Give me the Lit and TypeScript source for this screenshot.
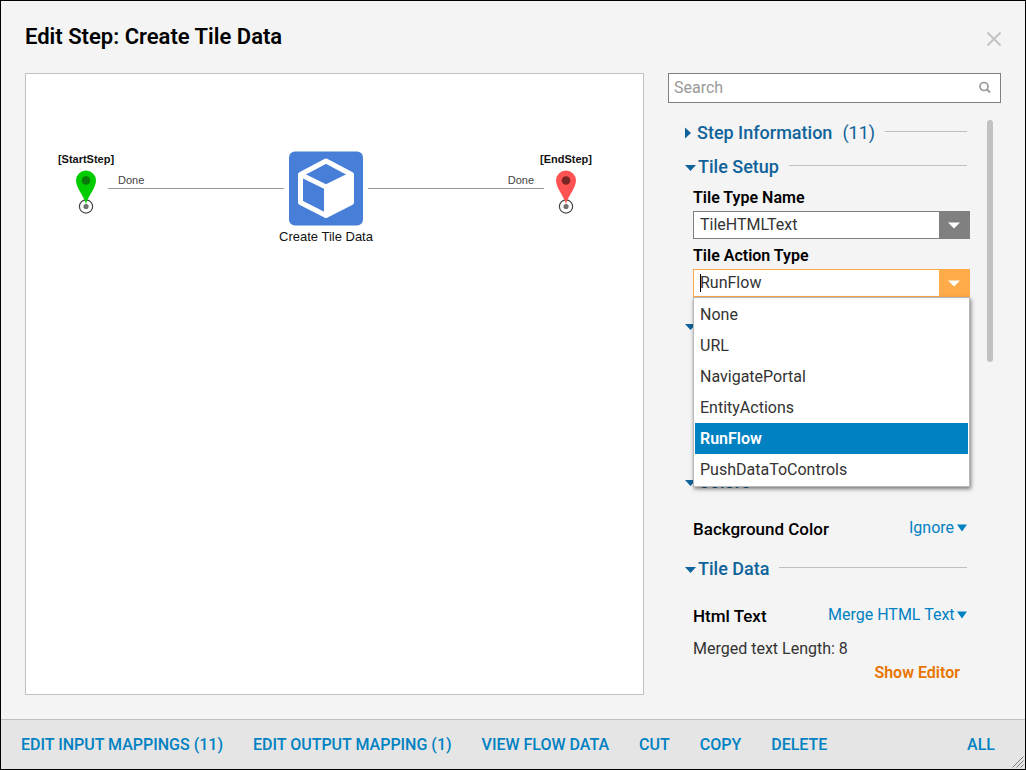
import { LitElement, html, svg, css, nothing } from "lit";
import { customElement, property, state } from "lit/decorators.js";
import { classMap } from "lit/directives/class-map.js";

const downArrow = (label = "arrow") => svg`
  <svg class=${label} width="12" height="7" viewBox="0 0 12 7" aria-hidden="true">
    <path d="M0 0.5h12L6 6.5z" fill="currentColor" />
  </svg>`;

@customElement("section-heading")
class SectionHeading extends LitElement {
  @property() name = "";
  @property() count = "";
  @property({ type: Boolean }) open = false;

  static styles = css`
    :host {
      display: block;
    }
    .heading {
      display: flex;
      align-items: center;
      width: 100%;
      height: 34px;
      margin: 0;
      padding: 0 3px 0 0;
      border: 0;
      background: none;
      color: #0f639a;
      font: 500 18px/24px Roboto, sans-serif;
      text-align: left;
      white-space: pre;
      cursor: pointer;
    }
    .marker {
      flex: none;
      width: 13px;
      height: 12px;
    }
    .marker.open {
      margin-right: 1px;
    }
    .count {
      margin-left: 10px;
      font-weight: 400;
    }
    .rule {
      flex: 1;
      height: 1px;
      margin: 0 0 4px 10px;
      background: #c0c0c0;
    }
  `;

  render() {
    return html`
      <button class="heading" aria-expanded=${this.open ? "true" : "false"} aria-label=${this.name ? nothing : "Section"}>
        <svg class=${this.open ? "marker open" : "marker"} viewBox="0 0 13 12" aria-hidden="true">
          <path d=${this.open ? "M1 4h11L6.5 10z" : "M1 0.5v11L7 6z"} fill="currentColor" />
        </svg>
        <span>${this.name}</span>
        ${this.count ? html`<span class="count">(${this.count})</span>` : nothing}
        <span class="rule"></span>
      </button>
    `;
  }
}

/** Canvas that shows the step between its start and end pins. */
@customElement("flow-canvas")
class FlowCanvas extends LitElement {
  static styles = css`
    :host {
      display: block;
      position: relative;
      overflow: hidden;
      box-sizing: border-box;
      border: 1px solid #c0c0c0;
      background: #fff;
      font-family: "Liberation Sans", Arial, sans-serif;
    }
    .node {
      position: absolute;
      display: flex;
      flex-direction: column;
      align-items: center;
      width: 120px;
      color: #111;
    }
    .start {
      left: 0;
      top: 78px;
    }
    .end {
      left: 480px;
      top: 78px;
    }
    .step {
      left: 240px;
      top: 77px;
      font-size: 13px;
      line-height: 20px;
    }
    .pin-label {
      font-size: 11px;
      font-weight: 700;
      line-height: 14px;
    }
    .pin {
      margin-top: 4px;
    }
    .link {
      position: absolute;
      top: 100px;
      height: 15px;
      padding: 0 10px;
      box-sizing: border-box;
      border-bottom: 1px solid #999;
      color: #444;
      font-size: 11px;
      line-height: 13px;
    }
    .link-in {
      left: 82px;
      width: 176px;
    }
    .link-out {
      left: 342px;
      width: 176px;
      text-align: right;
    }
  `;

  private pin(fill: string, dot: string) {
    return html`
      <svg class="pin" width="22" height="46" viewBox="0 0 22 46" aria-hidden="true">
        <circle cx="11" cy="36.500" r="6.600" fill="#fff" stroke="#444" stroke-width="1.200" />
        <path d="M11 34.500C10.500 28 1 18.500 1 10.500a10 10 0 0 1 20 0C21 18.500 11.500 28 11 34.500z" fill=${fill} />
        <circle cx="11" cy="10.500" r="4.300" fill=${dot} />
        <circle cx="11" cy="36.500" r="2.600" fill="#707070" />
      </svg>
    `;
  }

  render() {
    return html`
      <div class="link link-in">Done</div>
      <div class="link link-out">Done</div>
      <div class="node start">
        <span class="pin-label">[StartStep]</span>
        ${this.pin("#00cc00", "#087808")}
      </div>
      <div class="node step">
        <svg width="76" height="76" viewBox="0 0 76 76" aria-hidden="true">
          <rect x="1" y="0.500" width="74" height="74" rx="6" fill="#467ed8" />
          <path
            d="M38 10 63.500 23.500v28L38 64.500 12.500 51.500v-28z"
            fill="none"
            stroke="#fff"
            stroke-width="5"
            stroke-linejoin="round"
          />
          <path d="M12.500 23.500 38 36 63.500 23.500" fill="none" stroke="#fff" stroke-width="5" />
          <path d="M36 35.500 63.500 22.500v29L36 65z" fill="#fff" />
        </svg>
        <span>Create Tile Data</span>
      </div>
      <div class="node end">
        <span class="pin-label">[EndStep]</span>
        ${this.pin("#ff5252", "#7a2626")}
      </div>
    `;
  }
}

@customElement("app-root")
class AppRoot extends LitElement {
  @state() private action = "RunFlow";

  private readonly actions = ["None", "URL", "NavigatePortal", "EntityActions", "RunFlow", "PushDataToControls"];
  private readonly commands = [
    "EDIT INPUT MAPPINGS (11)",
    "EDIT OUTPUT MAPPING (1)",
    "VIEW FLOW DATA",
    "CUT",
    "COPY",
    "DELETE",
  ];

  static styles = css`
    :host {
      display: flex;
      flex-direction: column;
      position: relative;
      box-sizing: border-box;
      height: 100vh;
      overflow: hidden;
      border: 1px solid #000;
      background: #f4f4f4;
      color: #333;
      font: 400 16px/24px Roboto, sans-serif;
    }
    button,
    input,
    select {
      margin: 0;
      padding: 0;
      border: 0;
      border-radius: 0;
      outline: 0;
      background: none;
      color: inherit;
      font: inherit;
    }
    button {
      cursor: pointer;
    }
    .header {
      display: flex;
      align-items: center;
      justify-content: space-between;
      height: 72px;
      padding: 0 24px;
    }
    .title {
      margin: 0;
      color: #000;
      font-size: 22px;
      font-weight: 600;
      line-height: 28px;
    }
    .close {
      display: flex;
      margin-top: 4px;
      color: #c4c4c4;
    }
    .main {
      flex: 1;
      display: grid;
      grid-template-columns: minmax(0, 1fr) 333px;
      gap: 24px;
      min-height: 0;
      padding: 0 24px 24px;
    }
    .side {
      display: flex;
      flex-direction: column;
      min-height: 0;
    }
    .search {
      display: flex;
      align-items: center;
      height: 30px;
      box-sizing: border-box;
      padding: 0 8px 0 5px;
      border: 1px solid #808080;
      background: #fff;
      color: #999;
    }
    .search-input {
      flex: 1;
      min-width: 0;
    }
    .search-input::placeholder {
      color: #999;
      opacity: 1;
    }
    .panel {
      flex: 1;
      display: flex;
      min-height: 0;
      padding: 13px 8px 0 16px;
    }
    .properties {
      flex: 1;
      min-width: 0;
    }
    .track {
      width: 6px;
      margin: 4px 0 0 17px;
    }
    .thumb {
      height: 42%;
      border-radius: 3px;
      background: #c1c1c1;
    }
    .fields {
      display: flex;
      flex-direction: column;
      gap: 5px;
      padding: 2px 0 12px 9px;
    }
    .field {
      display: flex;
      flex-direction: column;
      gap: 1px;
      position: relative;
    }
    .label {
      color: #000;
      font-weight: 600;
    }
    .combo {
      display: flex;
      position: relative;
      height: 28px;
      box-sizing: border-box;
      border: 1px solid #808080;
      background: #fff;
    }
    .combo.active {
      border-color: #ffab4a;
    }
    .value {
      appearance: none;
      flex: 1;
      min-width: 0;
      padding: 0 0 0 6px;
    }
    .drop {
      display: flex;
      align-items: center;
      justify-content: center;
      width: 30px;
      background: #808080;
      color: #fff;
    }
    .active .drop {
      background: #ffab4a;
    }
    .caret {
      position: absolute;
      left: 6px;
      top: 4px;
      width: 1px;
      height: 18px;
      background: #000;
    }
    .list {
      position: absolute;
      z-index: 1;
      top: 100%;
      left: 0;
      right: 0;
      margin: 0;
      padding: 1px;
      border: 1px solid #b8b8b8;
      background: #fff;
      box-shadow: 1px 2px 4px rgba(0, 0, 0, 0.5);
      list-style: none;
    }
    .option {
      padding: 4px 5px 3px;
      cursor: pointer;
    }
    .option.selected {
      background: #0081c2;
      color: #fff;
      font-weight: 600;
    }
    .group {
      min-height: 122px;
    }
    .row {
      display: flex;
      align-items: center;
      justify-content: space-between;
      padding: 17px 3px 10px 9px;
    }
    .row .label {
      font-size: 17px;
      font-weight: 500;
    }
    .mode {
      display: flex;
      align-items: center;
      gap: 2px;
      padding-bottom: 2px;
      color: #0081c2;
    }
    .mode-select {
      appearance: none;
      height: 24px;
      cursor: pointer;
    }
    .note {
      margin: 0;
      padding: 0 0 0 9px;
      line-height: 20px;
    }
    .actions {
      display: flex;
      justify-content: flex-end;
      padding: 2px 10px 0 0;
    }
    .show {
      color: #e87500;
      font-weight: 600;
    }
    .footer {
      display: flex;
      align-items: center;
      gap: 30px;
      height: 49px;
      padding: 0 30px 0 20px;
      border-top: 1px solid #c0c0c0;
      background: #e5e5e5;
    }
    .command {
      color: #0081c2;
      font-weight: 500;
      white-space: nowrap;
    }
    .all {
      margin-left: auto;
    }
    .grip {
      position: absolute;
      right: 1px;
      bottom: 1px;
    }
  `;

  private mode(id: string, label: string, value: string) {
    return html`
      <div class="row">
        <label class="label" for=${id}>${label}</label>
        <span class="mode">
          <select class="mode-select" id=${id}>
            <option>${value}</option>
          </select>
          <svg width="10" height="8" viewBox="0 0 10 8" aria-hidden="true">
            <path d="M0 0.500h10L5 7.500z" fill="currentColor" />
          </svg>
        </span>
      </div>
    `;
  }

  render() {
    return html`
      <header class="header">
        <h1 class="title">Edit Step: Create Tile Data</h1>
        <button class="close" aria-label="Close">
          <svg width="14" height="14" viewBox="0 0 14 14" aria-hidden="true">
            <path d="M0.500 0.500l13 13M13.500 0.500l-13 13" stroke="currentColor" stroke-width="2" />
          </svg>
        </button>
      </header>

      <main class="main">
        <flow-canvas></flow-canvas>
        <aside class="side">
          <div class="search">
            <input class="search-input" type="text" placeholder="Search" aria-label="Search" />
            <svg width="14" height="14" viewBox="0 0 14 14" aria-hidden="true">
              <circle cx="6" cy="5.500" r="4" fill="none" stroke="currentColor" stroke-width="1.700" />
              <path d="M9 8.500l3 3" stroke="currentColor" stroke-width="2" />
            </svg>
          </div>

          <div class="panel">
            <div class="properties">
              <section-heading name="Step Information" count="11"></section-heading>
              <section-heading name="Tile Setup" open></section-heading>
              <div class="fields">
                <div class="field">
                  <label class="label" for="type">Tile Type Name</label>
                  <div class="combo">
                    <select class="value" id="type">
                      <option>TileHTMLText</option>
                    </select>
                    <span class="drop">${downArrow()}</span>
                  </div>
                </div>
                <div class="field">
                  <label class="label" for="action">Tile Action Type</label>
                  <div class="combo active">
                    <input
                      class="value"
                      id="action"
                      type="text"
                      role="combobox"
                      aria-expanded="true"
                      aria-controls="action-list"
                      .value=${this.action}
                    />
                    <span class="caret"></span>
                    <button class="drop" aria-label="Toggle list">${downArrow()}</button>
                  </div>
                  <ul class="list" id="action-list" role="listbox">
                    ${this.actions.map(
                      (name) => html`
                        <li
                          class=${classMap({ option: true, selected: name === this.action })}
                          role="option"
                          aria-selected=${name === this.action ? "true" : "false"}
                          @click=${() => (this.action = name)}
                        >
                          ${name}
                        </li>
                      `
                    )}
                  </ul>
                </div>
              </div>
              <section-heading open></section-heading>
              <div class="group"></div>
              <section-heading name="Colors" open></section-heading>
              ${this.mode("background", "Background Color", "Ignore")}
              <section-heading name="Tile Data" open></section-heading>
              ${this.mode("html-text", "Html Text", "Merge HTML Text")}
              <p class="note">Merged text Length: 8</p>
              <div class="actions"><button class="show">Show Editor</button></div>
            </div>
            <div class="track"><div class="thumb"></div></div>
          </div>
        </aside>
      </main>

      <footer class="footer">
        ${this.commands.map((name) => html`<button class="command">${name}</button>`)}
        <button class="command all">ALL</button>
      </footer>
      <svg class="grip" width="12" height="12" viewBox="0 0 12 12" aria-hidden="true">
        <path d="M0.500 11.500l11-11M4.500 11.500l7-7M8.500 11.500l3-3" stroke="#777" stroke-width="1" />
      </svg>
    `;
  }
}
